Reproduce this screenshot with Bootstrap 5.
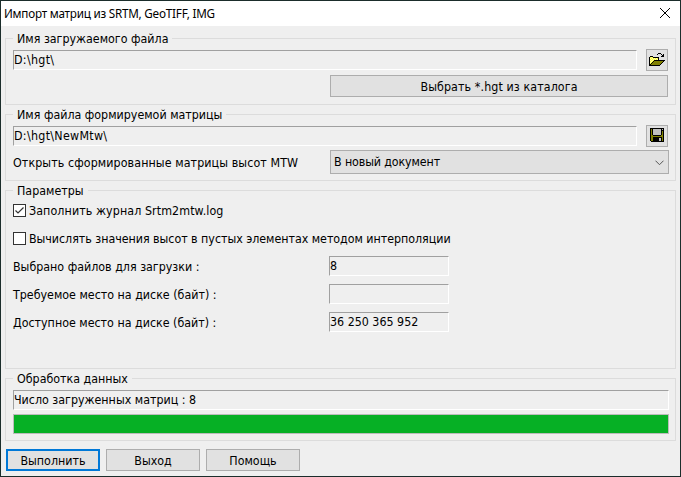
<!DOCTYPE html>
<html lang="ru">
<head>
<meta charset="utf-8">
<meta name="viewport" content="width=device-width, initial-scale=1">
<title>Импорт матриц из SRTM, GeoTIFF, IMG</title>
<link href="https://cdn.jsdelivr.net/npm/bootstrap@5.3.0/dist/css/bootstrap.min.css" rel="stylesheet">
<style>
body { font: 12.35px/18px "DejaVu Sans Condensed", "DejaVu Sans", sans-serif; font-stretch: condensed; color: #000; background: #efefef; white-space: nowrap; }
.dialog { width: 681px; height: 477px; border: 1px solid #1b2d2b; background: #efefef; }
.titlebar { height: 25px; padding: 0 9px 1px 3px; background: #fff; font: 11.7px/24px "Noto Sans", "Open Sans", sans-serif; letter-spacing: -.23px; }
.group { border: 1px solid #dcdcdc; margin: 0 4px 9px; padding: 0 7px; width: 671px; }
.group-source { margin-top: 12px; height: 67px; }
.group-target { height: 67px; }
.group-params { height: 179px; }
.group-progress { height: 63px; margin-bottom: 8px; }
.group-title { width: fit-content; height: 18px; margin: -10px 0 3px; padding: 0 4px; background: #efefef; line-height: 20px; }
.group-params .group-title { margin-bottom: -3px; }
.sunken { height: 20px; border: 1px solid; border-color: #a0a0a0 #fff #fff #a0a0a0; line-height: 19px; }
.path-field { width: 624px; letter-spacing: .3px; }
.wide { width: 656px; }
.win-btn { height: 22px; padding: 1px 0 0; border: 1px solid #adadad; border-radius: 0; background: #e1e1e1; color: #000; font-size: inherit; line-height: 20px; letter-spacing: inherit; }
.win-btn.is-default { border: 2px solid #0078d7; line-height: 18px; }
.win-btn.icon-btn { width: 22px; padding: 0; margin: -1px 0; }
.pick { width: 338px; }
.win-btn.pick { letter-spacing: .1px; }
.act { width: 94px; }
.combo { width: 339px; height: 24px; border: 1px solid #adadad; background: #e1e1e1; padding: 1px 4px 0 3px; line-height: 23px; letter-spacing: -.12px; }
.box { width: 13px; height: 13px; border: 1px solid #333; background: #fff; margin-right: 3px; }
.line { height: 28px; }
.line > span:not(.box) { position: relative; top: 1px; }
.caption { width: 316px; }
.spaced { letter-spacing: .09px; }
.snug { letter-spacing: -.03px; }
.value { width: 120px; }
.win-progress { height: 20px; border: 1px solid #bcbcbc; border-radius: 0; margin-top: 4px; }
.win-progress .progress-bar { background: #06b025; }
.row-pick { padding-top: 5px; }
.row-open { padding-top: 4px; margin-right: -1px; }
.row-open > span { padding-top: 2px; line-height: 16px; }
.actions { gap: 6px; padding-left: 5px; }
svg { display: block; }
</style>
<script src="https://cdn.jsdelivr.net/npm/bootstrap@5.3.0/dist/js/bootstrap.bundle.min.js" defer></script>
</head>
<body>
<main class="dialog overflow-hidden">
  <header class="titlebar d-flex justify-content-between align-items-center">
    <span>Импорт матриц из SRTM, GeoTIFF, IMG</span>
    <svg width="12" height="12" viewBox="0 0 12 12" stroke="#000"><path d="M1 1L11 11M11 1L1 11"/></svg>
  </header>

  <section class="group group-source">
    <div class="group-title">Имя загружаемого файла</div>
    <div class="d-flex justify-content-between">
      <div class="sunken path-field">D:\hgt\</div>
      <button class="btn win-btn icon-btn d-flex justify-content-center align-items-center" aria-label="Открыть">
        <svg width="16" height="14" viewBox="0 0 16 14" shape-rendering="crispEdges">
          <path fill="#ff3" d="M1 4h3v1h5v2h-4v1h-1v1h-1v1h-1v1h-1z"/>
          <path fill="#ffa" d="M2 4h1v1h-1zM1 5h1v1h-1zM3 5h1v1h-1zM5 5h1v1h-1zM7 5h1v1h-1zM2 6h1v1h-1zM4 6h1v1h-1zM6 6h1v1h-1zM8 6h1v1h-1zM1 7h1v1h-1zM3 7h1v1h-1zM2 8h1v1h-1zM1 9h1v1h-1z"/>
          <path fill="#808000" d="M5 8h9v1h-1v1h-1v1h-1v1h-9v-1h1v-1h1v-1h1z"/>
          <path d="M9 0h3v1h-3zM8 1h1v1h-1zM12 1h1v1h-1zM14 1h1v3h-3v-1h1v-1h1zM1 3h3v1h-3zM0 4h1v9h-1zM4 4h6v3h-1v-2h-5zM5 7h11v1h-11zM4 8h1v1h-1zM14 8h1v1h-1zM3 9h1v1h-1zM13 9h1v1h-1zM2 10h1v1h-1zM12 10h1v1h-1zM1 11h1v1h-1zM11 11h1v1h-1zM0 12h11v1h-11z"/>
        </svg>
      </button>
    </div>
    <div class="row-pick d-flex justify-content-end">
      <button class="btn win-btn pick">Выбрать *.hgt из каталога</button>
    </div>
  </section>

  <section class="group group-target">
    <div class="group-title">Имя файла формируемой матрицы</div>
    <div class="d-flex justify-content-between">
      <div class="sunken path-field">D:\hgt\NewMtw\</div>
      <button class="btn win-btn icon-btn d-flex justify-content-center align-items-center" aria-label="Сохранить">
        <svg width="14" height="16" viewBox="0 0 14 16" shape-rendering="crispEdges">
          <path d="M0 0h14v14h-13v-1h-1z"/>
          <path fill="#808000" d="M1 1h1v6h1v1h8v-1h1v-4h1v10h-1v-4h-9v4h-2z"/>
          <path fill="#c0c0c0" d="M3 1h8v6h-8zM12 1h1v1h-1zM9 10h2v3h-2z"/>
        </svg>
      </button>
    </div>
    <div class="row-open d-flex justify-content-between align-items-center">
      <span class="spaced">Открыть сформированные матрицы высот MTW</span>
      <div class="combo d-flex justify-content-between align-items-center" role="combobox">
        <span>В новый документ</span>
        <svg width="9" height="6" viewBox="0 0 9 6" fill="none" stroke="#555"><path d="M.5 .7L4.5 4.7L8.5 .7"/></svg>
      </div>
    </div>
  </section>

  <section class="group group-params">
    <div class="group-title">Параметры</div>
    <div class="line d-flex align-items-center">
      <span class="box" role="checkbox" aria-checked="true">
        <svg width="11" height="11" viewBox="0 0 11 11" fill="none" stroke="#333" stroke-width="1.2"><path d="M1.5 5.5L4 8L9.5 2.5"/></svg>
      </span>
      <span class="spaced">Заполнить журнал Srtm2mtw.log</span>
    </div>
    <div class="line d-flex align-items-center">
      <span class="box" role="checkbox" aria-checked="false"></span>
      <span class="snug">Вычислять значения высот в пустых элементах методом интерполяции</span>
    </div>
    <div class="line d-flex align-items-center"><span class="caption">Выбрано файлов для загрузки :</span><div class="sunken value">8</div></div>
    <div class="line d-flex align-items-center"><span class="caption">Требуемое место на диске (байт) :</span><div class="sunken value"></div></div>
    <div class="line d-flex align-items-center"><span class="caption">Доступное место на диске (байт) :</span><div class="sunken value">36 250 365 952</div></div>
  </section>

  <section class="group group-progress">
    <div class="group-title">Обработка данных</div>
    <div class="sunken wide">Число загруженных матриц : 8</div>
    <div class="progress win-progress wide"><div class="progress-bar" style="width:100%"></div></div>
  </section>

  <footer class="actions d-flex">
    <button class="btn win-btn is-default act">Выполнить</button>
    <button class="btn win-btn act">Выход</button>
    <button class="btn win-btn act">Помощь</button>
  </footer>
</main>
</body>
</html>
